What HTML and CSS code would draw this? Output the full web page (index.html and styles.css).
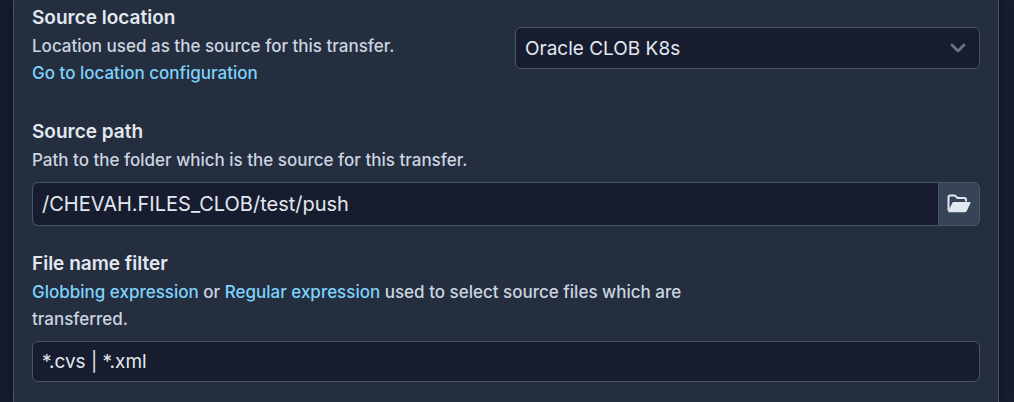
FILE: index.html
```html
<!DOCTYPE html>
<html lang="en">
<head>
	<meta charset="utf-8">
	<title>Transfer source</title>
	<meta name="viewport" content="width=device-width, initial-scale=1">
	<link rel="stylesheet" href="styles.css">
</head>
<body>
<form class="card">
	<div class="field field-split">
		<div class="field-info">
			<label class="field-title" for="source">Source location</label>
			<p class="help" id="source-help">Location used as the source for this transfer.<br>
				<a href="#location">Go to location configuration</a></p>
		</div>
		<div class="select-wrap">
			<select class="control" id="source" aria-describedby="source-help">
				<option>Oracle CLOB K8s</option>
			</select>
			<svg class="chevron" viewBox="0 0 16 16" aria-hidden="true">
				<path d="M2 5l6 6 6-6" fill="none" stroke="currentColor" stroke-width="2.8" stroke-linecap="round" stroke-linejoin="round"/>
			</svg>
		</div>
	</div>

	<div class="field">
		<label class="field-title" for="source-path">Source path</label>
		<p class="help" id="path-help">Path to the folder which is the source for this transfer.</p>
		<div class="input-group">
			<input class="control" type="text" id="source-path" value="/CHEVAH.FILES_CLOB/test/push" aria-describedby="path-help">
			<button class="browse" type="button" aria-label="Browse folders">
				<svg class="folder" viewBox="0 0 24 20" aria-hidden="true">
					<path d="M1.5 16.5V3.3Q1.5 1.5 3.3 1.5H7.2Q8 1.5 8.6 2.1L10 3.5Q10.6 4.1 11.4 4.1H17.2Q19 4.1 19 5.9V7.5" fill="none" stroke="currentColor" stroke-width="2"/>
					<path d="M6.6 8H22.6Q24 8 23.4 9.3L19.6 17.2Q19.1 18.2 18 18.2H2Q.8 18.2 1.4 17L5.2 8.9Q5.6 8 6.6 8Z" fill="currentColor"/>
				</svg>
			</button>
		</div>
	</div>

	<div class="field">
		<label class="field-title" for="filter">File name filter</label>
		<p class="help" id="filter-help"><a href="#globbing">Globbing expression</a> or <a href="#regex">Regular expression</a> used to select source files which are transferred.</p>
		<input class="control" type="text" id="filter" value="*.cvs | *.xml" aria-describedby="filter-help">
	</div>
</form>
</body>
</html>
```

FILE: styles.css
```css
* {
	box-sizing: border-box;
}
body {
	margin: 0;
	padding: 0 15px 0 13px;
	background-color: #171d2e;
	color: #cbd5e1;
	font-family: Inter, "Liberation Sans", sans-serif;
	font-size: 17px;
	font-weight: 500;
	line-height: 27px;
}
.card {
	min-height: 100vh;
	padding: 3px 18px 20px;
	background-color: #252e3e;
	border: solid #475569;
	border-width: 0 1px;
	box-shadow: 0 0 12px rgba(0, 0, 0, 0.4);
}
.field {
	margin-bottom: 23px;
}
.field:last-child {
	margin-bottom: 0;
}
.field-split {
	display: grid;
	grid-template-columns: 1fr 1fr;
	gap: 18px;
	align-items: center;
	margin-bottom: 30px;
}
.field-title {
	display: block;
	color: #e2e8f0;
	font-size: 19px;
	font-weight: 600;
	line-height: 30px;
}
.help {
	max-width: 700px;
	margin: 0 0 8px;
}
.field-split .help {
	margin: 0;
}
.help a {
	color: #7dd3fc;
	text-decoration: none;
}
.help a:hover {
	text-decoration: underline;
}
.control {
	display: block;
	width: 100%;
	height: 41px;
	padding: 0 9px;
	background-color: #171d2e;
	border: 1px solid #475569;
	border-radius: 6px;
	color: #e2e8f0;
	font: inherit;
	font-size: 19px;
	font-weight: 400;
	appearance: none;
}
.select-wrap {
	position: relative;
	padding-top: 6px;
}
.select-wrap .control {
	height: 42px;
}
.chevron {
	position: absolute;
	top: 19px;
	right: 14px;
	width: 16px;
	height: 16px;
	color: #6b7280;
	pointer-events: none;
}
.input-group {
	display: flex;
	height: 44px;
}
.input-group .control {
	flex: 1;
	height: auto;
	border-radius: 6px 0 0 6px;
	border-right: 0;
	font-size: 20px;
}
.browse {
	display: flex;
	align-items: center;
	justify-content: center;
	width: 42px;
	padding: 0;
	background-color: #374356;
	border: 1px solid #475569;
	border-radius: 0 6px 6px 0;
	color: #e2e8f0;
	cursor: pointer;
}
.folder {
	width: 24px;
	height: 20px;
}
```
